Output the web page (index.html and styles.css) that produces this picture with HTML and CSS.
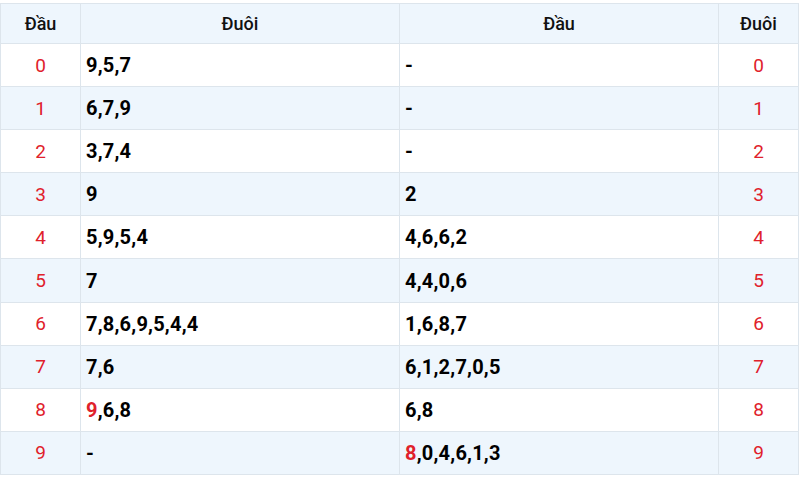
FILE: index.html
```html
<!DOCTYPE html>
<html lang="vi">
<head>
<meta charset="utf-8">
<link rel="stylesheet" href="styles.css">
</head>
<body>
<table class="lt">
  <colgroup>
    <col class="c-num"><col class="c-val"><col class="c-val"><col class="c-num2">
  </colgroup>
  <thead>
    <tr><th>Đầu</th><th>Đuôi</th><th>Đầu</th><th>Đuôi</th></tr>
  </thead>
  <tbody>
    <tr><td class="n">0</td><td class="v">9,5,7</td><td class="v">-</td><td class="n">0</td></tr>
    <tr><td class="n">1</td><td class="v">6,7,9</td><td class="v">-</td><td class="n">1</td></tr>
    <tr><td class="n">2</td><td class="v">3,7,4</td><td class="v">-</td><td class="n">2</td></tr>
    <tr><td class="n">3</td><td class="v">9</td><td class="v">2</td><td class="n">3</td></tr>
    <tr><td class="n">4</td><td class="v">5,9,5,4</td><td class="v">4,6,6,2</td><td class="n">4</td></tr>
    <tr><td class="n">5</td><td class="v">7</td><td class="v">4,4,0,6</td><td class="n">5</td></tr>
    <tr><td class="n">6</td><td class="v">7,8,6,9,5,4,4</td><td class="v">1,6,8,7</td><td class="n">6</td></tr>
    <tr><td class="n">7</td><td class="v">7,6</td><td class="v">6,1,2,7,0,5</td><td class="n">7</td></tr>
    <tr><td class="n">8</td><td class="v"><span class="hl">9</span>,6,8</td><td class="v">6,8</td><td class="n">8</td></tr>
    <tr><td class="n">9</td><td class="v">-</td><td class="v"><span class="hl">8</span>,0,4,6,1,3</td><td class="n">9</td></tr>
  </tbody>
</table>
</body>
</html>
```
FILE: styles.css
```css
html, body {
  margin: 0;
  padding: 0;
  background: #ffffff;
}
body {
  padding-top: 3px;
  font-family: Roboto, "Liberation Sans", sans-serif;
}
.lt {
  width: 798px;
  border-collapse: collapse;
  table-layout: fixed;
}
.c-num { width: 80px; }
.c-val { width: 319px; }
.c-num2 { width: 80px; }
.lt th, .lt td {
  border: 1px solid #dde5ec;
  padding: 0;
}
.lt th {
  height: 39px;
  background: #eef6fd;
  font-weight: 500;
  font-size: 18px;
  color: #111;
  text-align: center;
}
.lt td {
  height: 42.1px;
}
.lt tbody tr:nth-child(even) td {
  background: #eef6fd;
}
.n {
  text-align: center;
  color: #e0212b;
  font-size: 19px;
}
.v {
  text-align: left;
  padding-left: 5px !important;
  font-weight: 700;
  font-size: 20px;
  color: #000;
  letter-spacing: 0.2px;
}
.hl { color: #e0212b; }
```
